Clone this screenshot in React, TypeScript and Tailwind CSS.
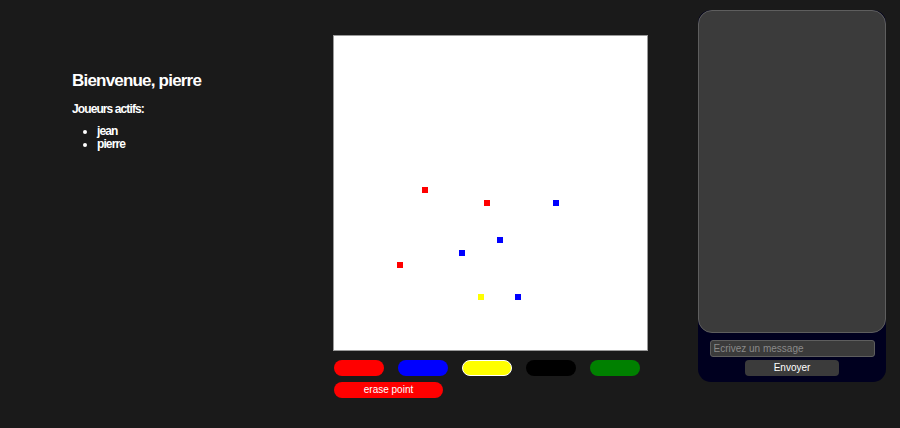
const dots = [
  { x: 88, y: 151, c: "bg-[#ff0000]" },
  { x: 150, y: 164, c: "bg-[#ff0000]" },
  { x: 63, y: 226, c: "bg-[#ff0000]" },
  { x: 219, y: 164, c: "bg-[#0000ff]" },
  { x: 163, y: 201, c: "bg-[#0000ff]" },
  { x: 125, y: 214, c: "bg-[#0000ff]" },
  { x: 181, y: 258, c: "bg-[#0000ff]" },
  { x: 144, y: 258, c: "bg-[#ffff00]" },
];

const colors = [
  "bg-[#ff0000]",
  "bg-[#0000ff]",
  "bg-[#ffff00] border border-white",
  "bg-black",
  "bg-[#008000]",
];

export default function App() {
  return (
    <div className="w-[900px] h-[428px] bg-[#1a1a1a] text-white font-['Liberation_Sans',sans-serif] flex">
      <div className="w-[333px] pl-[72px] pt-[70px]">
        <h1 className="text-[17px] font-bold leading-[22px] tracking-[-0.8px]">Bienvenue, pierre</h1>
        <h2 className="mt-[9px] text-[12px] font-bold leading-[16px] tracking-[-0.9px]">Joueurs actifs:</h2>
        <ul className="mt-[8px] list-disc pl-[25px] text-[12px] font-bold leading-[13px] tracking-[-0.9px]">
          <li>jean</li>
          <li>pierre</li>
        </ul>
      </div>

      <div className="pt-[35px] w-[365px]">
        <div className="relative w-[315px] h-[316px] bg-white border border-[#9a9a9a]">
          {dots.map((d, i) => (
            <div
              key={i}
              className={`absolute w-[6px] h-[6px] ${d.c}`}
              style={{ left: d.x, top: d.y }}
            />
          ))}
        </div>
        <div className="mt-[9px] flex gap-[14px] pl-[1px]">
          {colors.map((c, i) => (
            <button key={i} className={`w-[50px] h-[16px] rounded-[8px] ${c}`} />
          ))}
        </div>
        <button className="mt-[6px] ml-[1px] w-[109px] h-[16px] rounded-[8px] bg-[#ff0000] text-[10px] text-white leading-[16px]">
          erase point
        </button>
      </div>

      <div className="pt-[10px]">
        <div className="w-[188px] h-[372px] bg-[#00001f] rounded-[13px] flex flex-col">
          <div className="h-[323px] bg-[#3b3b3b] border border-[#5e5e5e] rounded-[14px]" />
          <div className="flex flex-col items-center pt-[7px] gap-[3px]">
            <input
              placeholder="Ecrivez un message"
              className="w-[165px] h-[17px] bg-[#3b3b3b] border border-[#5e5e5e] rounded-[3px] px-[3px] text-[10px] text-white placeholder:text-[#8a8a8a] outline-none"
            />
            <button className="w-[94px] h-[16px] bg-[#3b3b3b] rounded-[4px] text-[10px] text-white leading-[16px]">
              Envoyer
            </button>
          </div>
        </div>
      </div>
    </div>
  );
}
